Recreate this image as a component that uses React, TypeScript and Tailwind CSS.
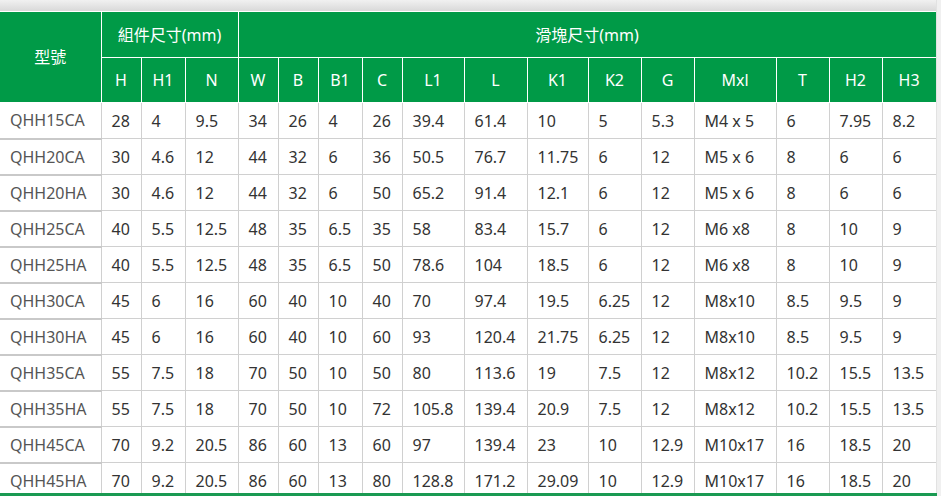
const widths = [101, 40, 44, 53, 40, 40, 44, 40, 62, 63, 61, 53, 53, 82, 53, 53, 54]

const sub1 = ['H', 'H1', 'N']
const sub2 = ['W', 'B', 'B1', 'C', 'L1', 'L', 'K1', 'K2', 'G', 'Mxl', 'T', 'H2', 'H3']

const rows = [
  ['QHH15CA', '28', '4', '9.5', '34', '26', '4', '26', '39.4', '61.4', '10', '5', '5.3', 'M4 x 5', '6', '7.95', '8.2'],
  ['QHH20CA', '30', '4.6', '12', '44', '32', '6', '36', '50.5', '76.7', '11.75', '6', '12', 'M5 x 6', '8', '6', '6'],
  ['QHH20HA', '30', '4.6', '12', '44', '32', '6', '50', '65.2', '91.4', '12.1', '6', '12', 'M5 x 6', '8', '6', '6'],
  ['QHH25CA', '40', '5.5', '12.5', '48', '35', '6.5', '35', '58', '83.4', '15.7', '6', '12', 'M6 x8', '8', '10', '9'],
  ['QHH25HA', '40', '5.5', '12.5', '48', '35', '6.5', '50', '78.6', '104', '18.5', '6', '12', 'M6 x8', '8', '10', '9'],
  ['QHH30CA', '45', '6', '16', '60', '40', '10', '40', '70', '97.4', '19.5', '6.25', '12', 'M8x10', '8.5', '9.5', '9'],
  ['QHH30HA', '45', '6', '16', '60', '40', '10', '60', '93', '120.4', '21.75', '6.25', '12', 'M8x10', '8.5', '9.5', '9'],
  ['QHH35CA', '55', '7.5', '18', '70', '50', '10', '50', '80', '113.6', '19', '7.5', '12', 'M8x12', '10.2', '15.5', '13.5'],
  ['QHH35HA', '55', '7.5', '18', '70', '50', '10', '72', '105.8', '139.4', '20.9', '7.5', '12', 'M8x12', '10.2', '15.5', '13.5'],
  ['QHH45CA', '70', '9.2', '20.5', '86', '60', '13', '60', '97', '139.4', '23', '10', '12.9', 'M10x17', '16', '18.5', '20'],
  ['QHH45HA', '70', '9.2', '20.5', '86', '60', '13', '80', '128.8', '171.2', '29.09', '10', '12.9', 'M10x17', '16', '18.5', '20'],
]

export default function App() {
  return (
    <div
      className="relative flex w-[941px] h-[496px] overflow-hidden bg-white"
      style={{ fontFamily: '"Noto Sans", "Noto Sans CJK TC", sans-serif' }}
    >
      <div className="w-[936px] shrink-0">
        {/* shadow band above the table */}
        <div className="h-[11px] bg-gradient-to-b from-[#f1f1f1] to-[#d9d9d9]" />
        <table className="table-fixed border-collapse w-[936px] text-[16px]">
          <colgroup>
            {widths.map((w, i) => (
              <col key={i} style={{ width: w }} />
            ))}
          </colgroup>
          <thead className="bg-[#009a47] text-white font-normal">
            <tr className="h-[46px]">
              <th rowSpan={2} className="font-normal border border-white border-l-0">
                型號
              </th>
              <th colSpan={3} className="font-normal border border-white">
                組件尺寸(mm)
              </th>
              <th colSpan={13} className="font-normal border border-white">
                滑塊尺寸(mm)
              </th>
            </tr>
            <tr className="h-[45px]">
              {[...sub1, ...sub2].map((h) => (
                <th key={h} className="font-normal border border-white">
                  {h}
                </th>
              ))}
            </tr>
          </thead>
          <tbody>
            {rows.map((r) => (
              <tr key={r[0]} className="h-[36px]">
                {r.map((v, i) =>
                  i === 0 ? (
                    <td
                      key={i}
                      className="px-[10px] text-[#555] border-b-2 border-b-[#c9c9c9] border-r border-r-[#d0d0d0] whitespace-nowrap"
                    >
                      {v}
                    </td>
                  ) : (
                    <td
                      key={i}
                      className="px-[10px] text-[#333] border border-[#d0d0d0] whitespace-nowrap"
                    >
                      {v}
                    </td>
                  )
                )}
              </tr>
            ))}
          </tbody>
        </table>
      </div>
      <div className="w-[5px] bg-[#f0f0f0] border-l border-[#e2e2e2]" />
      <div className="absolute left-0 bottom-0 w-[937px] h-[3px] bg-[#1a9a52]" />
    </div>
  )
}
